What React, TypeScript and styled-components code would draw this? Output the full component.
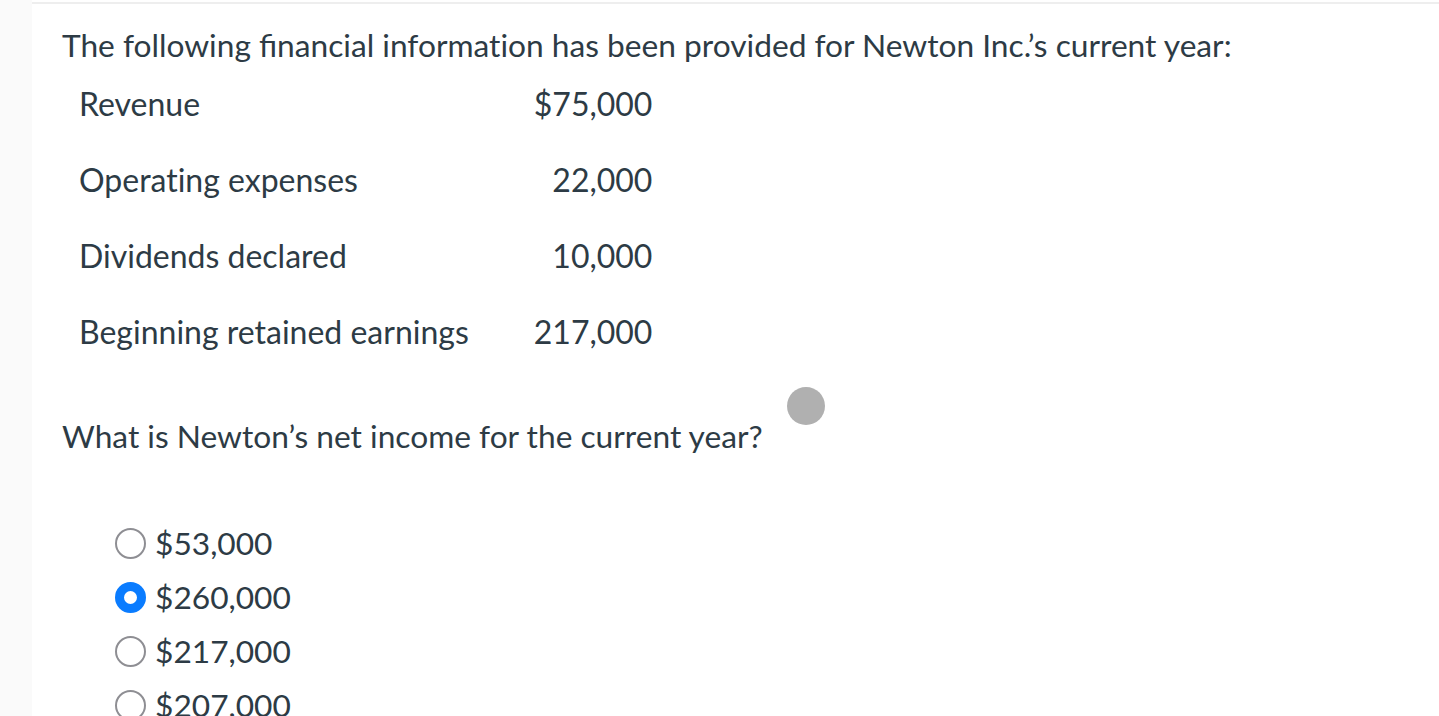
import React from 'react';
import styled, { createGlobalStyle } from 'styled-components';

const GlobalStyle = createGlobalStyle`
  html, body {
    margin: 0;
    padding: 0;
    background: #fff;
  }
  body {
    font-family: Lato, "Open Sans", sans-serif;
    color: #2d3b45;
  }
`;

const Page = styled.div`
  display: flex;
  min-height: 716px;
`;

const SideStrip = styled.div`
  width: 32px;
  flex-shrink: 0;
  background: #fafafa;
`;

const Main = styled.div`
  flex: 1;
  margin-top: 2px;
  border-top: 2px solid #eeeeee;
  padding: 0 30px;
`;

const Title = styled.p`
  margin: 0;
  padding-top: 21px;
  font-size: 31.7px;
  line-height: 40px;
`;

// Lato ligates "ti"; the reference keeps it as two letters
const Plain = styled.span`
  font-variant-ligatures: none;
`;

const Table = styled.div`
  display: grid;
  grid-template-columns: max-content max-content;
  column-gap: 65px;
  grid-auto-rows: 76px;
  margin: 19px 0 0 17px;
  font-size: 32px;
  font-variant-ligatures: none;
`;

const Cell = styled.div<{ $right?: boolean }>`
  text-align: ${p => (p.$right ? 'right' : 'left')};
  line-height: 40px;
`;

const QuestionWrap = styled.div`
  position: relative;
  margin-top: 28px;
`;

const Question = styled.p`
  margin: 0;
  font-size: 31.7px;
  line-height: 40px;
`;

const Marker = styled.span`
  position: absolute;
  left: 725px;
  top: -29px;
  width: 38px;
  height: 38px;
  border-radius: 50%;
  background: #b0b0b0;
`;

const Options = styled.div`
  display: flex;
  flex-direction: column;
  gap: 14px;
  margin: 67px 0 0 53px;
`;

const Option = styled.label`
  display: flex;
  align-items: center;
  gap: 9px;
  font-size: 31.7px;
  line-height: 40px;
`;

const Radio = styled.span<{ $checked?: boolean }>`
  box-sizing: border-box;
  width: 31px;
  height: 31px;
  border-radius: 50%;
  background: #fff;
  border: ${p => (p.$checked ? '9px solid #0a7cff' : '2px solid #8e8e93')};
`;

const rows = [
  ['Revenue', '$75,000'],
  ['Operating expenses', '22,000'],
  ['Dividends declared', '10,000'],
  ['Beginning retained earnings', '217,000'],
];

const answers = ['$53,000', '$260,000', '$217,000', '$207,000'];

const App: React.FC = () => {
  return (
    <>
      <GlobalStyle />
      <Page>
        <SideStrip />
        <Main>
          <Title>
            The following financial <Plain>information</Plain> has been provided for Newton Inc.’s current year:
          </Title>
          <Table>
            {rows.map(([label, value]) => (
              <React.Fragment key={label}>
                <Cell>{label}</Cell>
                <Cell $right>{value}</Cell>
              </React.Fragment>
            ))}
          </Table>
          <QuestionWrap>
            <Question>What is Newton’s net income for the current year?</Question>
            <Marker />
          </QuestionWrap>
          <Options>
            {answers.map((a, i) => (
              <Option key={a}>
                <Radio $checked={i === 1} />
                {a}
              </Option>
            ))}
          </Options>
        </Main>
      </Page>
    </>
  );
};

export default App;
